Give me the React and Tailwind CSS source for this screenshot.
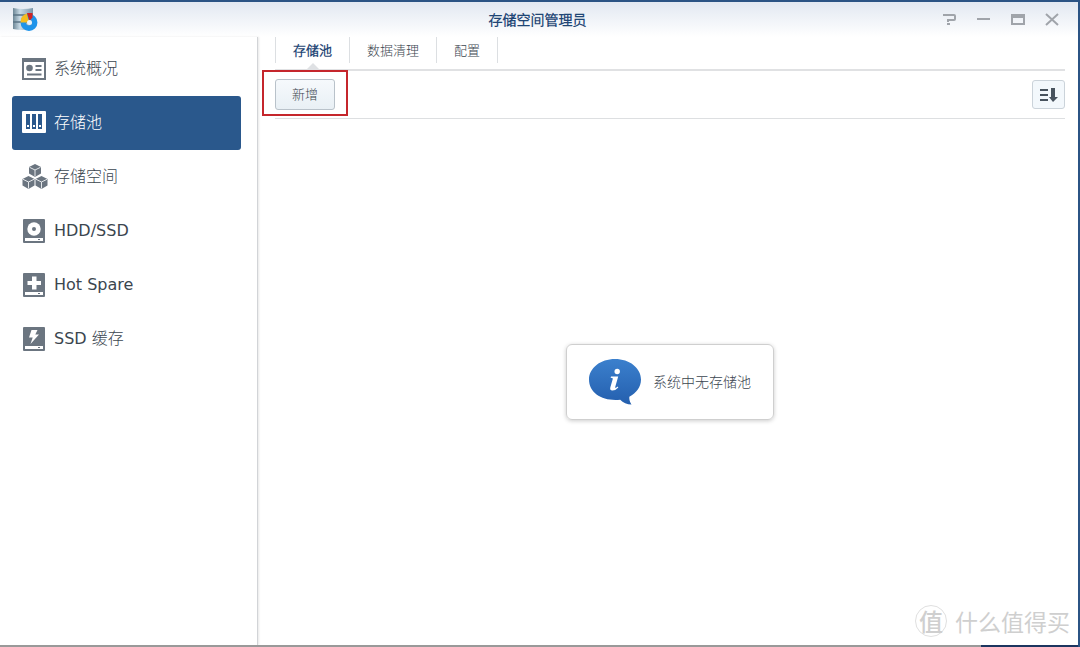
import React, { useState } from 'react';

const OverviewIcon = () => (
  <svg width="24" height="24" viewBox="0 0 24 24" fill="none">
    <rect x="1" y="2" width="22" height="20" fill="#fff" stroke="currentColor" strokeWidth="2" />
    <path d="M0 1h24v4H0z" fill="currentColor" />
    <circle cx="7.5" cy="11" r="3.3" fill="currentColor" />
    <path d="M13.5 9h6M13.5 13h6M5 17.5h14.5" stroke="currentColor" strokeWidth="2" />
  </svg>
);

const PoolIcon = () => (
  <svg width="24" height="24" viewBox="0 0 24 24" fill="none">
    <rect width="24" height="22" rx="1" fill="currentColor" />
    <path d="M4 3h4v15H4zM10 3h4v15h-4zM16 3h4v15h-4z" fill="#2a588c" />
    <path d="M5 14h2v2H5zM11 14h2v2h-2zM17 14h2v2h-2z" fill="currentColor" />
  </svg>
);

const Cube = ({ x, y }) => (
  <g transform={`translate(${x} ${y})`}>
    <path d="M6 0l6 3v6.5L6 13 0 9.5V3z" fill="currentColor" />
    <path d="M.5 3.3L6 6l5.5-2.7M6 6v6.5" stroke="#e4e7ea" strokeWidth="1" fill="none" />
  </g>
);

const VolumeIcon = () => (
  <svg width="26" height="26" viewBox="0 0 26 26" fill="none">
    <Cube x={7} y={0} />
    <Cube x={0.5} y={12} />
    <Cube x={13.5} y={12} />
  </svg>
);

const DriveIcon = ({ children }) => (
  <svg width="24" height="24" viewBox="0 0 24 24" fill="none">
    <rect x="1" width="22" height="24" rx="1" fill="currentColor" />
    <path d="M3 19h18v3H3z" fill="#fff" />
    <path d="M16 20h2v1h-2z" fill="currentColor" />
    {children}
  </svg>
);

const DiskIcon = () => (
  <DriveIcon>
    <circle cx="12" cy="10" r="6.7" fill="#fff" />
    <circle cx="12" cy="10" r="2" fill="currentColor" />
  </DriveIcon>
);

const SpareIcon = () => (
  <DriveIcon>
    <path d="M10 3.5h4.5V8H19v4h-4.5v4.5H10V12H5.5V8H10z" fill="#fff" />
  </DriveIcon>
);

const CacheIcon = () => (
  <DriveIcon>
    <path d="M9.5 3h6l-2.2 4.5H17L8.5 17l2.2-6.5H7z" fill="#fff" />
  </DriveIcon>
);

const AppLogo = () => (
  <svg width="26" height="26" viewBox="0 0 26 26" fill="none">
    <defs>
      <linearGradient id="rack" x1="0" y1="0" x2="1" y2="0">
        <stop offset="0" stopColor="#6d8796" />
        <stop offset=".35" stopColor="#c9dbe6" />
        <stop offset="1" stopColor="#7894a8" />
      </linearGradient>
    </defs>
    <path d="M1 1q10 2 20 0v21q-10 2-20 0z" fill="url(#rack)" />
    <path d="M1 8h20M1 15h20" stroke="#5b7485" strokeWidth="1.5" />
    <circle cx="17" cy="15.5" r="5.7" stroke="#1e94ea" strokeWidth="5.5" />
    <path d="M17 15.5H8.5a8.5 8.5 0 0 1 6.5-9z" fill="#f5bd1f" />
    <path d="M17.5 14L15 6h5.5v4.5z" fill="#cf2424" />
    <circle cx="17.5" cy="15.5" r="2.5" fill="#eaf3fa" />
  </svg>
);

const InfoBubble = () => (
  <svg width="52" height="46" viewBox="0 0 52 46" fill="none">
    <defs>
      <linearGradient id="bubble" x1="0" y1="0" x2="0" y2="1">
        <stop offset="0" stopColor="#3b80cd" />
        <stop offset="1" stopColor="#245fae" />
      </linearGradient>
    </defs>
    <path
      d="M26 0C40.5 0 52 9 52 20.5c0 7.5-4.500 13.500-11.700 17.200-.2 3 .7 5.600 2.200 7.900-4.500-.3-8.500-2-11.300-4.900C14 42.500 0 34.500 0 20.500 0 9 11.500 0 26 0z"
      fill="url(#bubble)"
    />
    <circle cx="28.2" cy="12.5" r="2.7" fill="#fff" />
    <path d="M22 17.5h7.2l-3.2 11.2q1 .3 2.700-1.200l.6.900q-3 3.300-6 3.200-2.700-.4-2-3.200l2.600-8.900q-.8-.7-2.300-.7z" fill="#fff" />
  </svg>
);

const navItems = [
  { label: '系统概况', icon: OverviewIcon },
  { label: '存储池', icon: PoolIcon },
  { label: '存储空间', icon: VolumeIcon },
  { label: 'HDD/SSD', icon: DiskIcon },
  { label: 'Hot Spare', icon: SpareIcon },
  { label: 'SSD 缓存', icon: CacheIcon },
];

const tabs = ['存储池', '数据清理', '配置'];

const windowControls = [
  { label: '帮助', path: 'M0 2h11q1 0 1 1v3q0 1-1 1H5v2M4 11h3' },
  { label: '最小化', path: 'M0 6h13' },
  { label: '最大化', path: 'M1 2h12v9H1zM1 4h12' },
  { label: '关闭', path: 'M1 1l12 11M13 1l-12 11' },
];

const TitleBar = () => (
  <header className="grid h-[35px] grid-cols-[1fr_auto_1fr] items-center bg-linear-to-b from-[#e2e8f1] to-white pr-[19px] pl-3">
    <AppLogo />
    <h1 className="pl-1 text-sm font-bold text-[#1f4675]">存储空间管理员</h1>
    <div className="flex justify-end gap-5">
      {windowControls.map((control) => (
        <button key={control.label} type="button" aria-label={control.label} className="text-[#a0a4aa]">
          <svg width="14" height="14" viewBox="0 0 14 14" fill="none">
            <path d={control.path} stroke="currentColor" strokeWidth="2" />
          </svg>
        </button>
      ))}
    </div>
  </header>
);

const Sidebar = ({ active, onSelect }) => (
  <nav className="w-[258px] shrink-0 border-r border-[#d2d4d7] pt-[5px] pr-4 pl-3 shadow-[1px_0_2px_#e8e8e8]">
    {navItems.map((item) => {
      const Icon = item.icon;
      const selected = item.label === active;
      return (
        <button
          key={item.label}
          type="button"
          onClick={() => onSelect(item.label)}
          className={`flex h-[54px] w-full items-center rounded-[3px] pl-[10px] text-base ${
            selected ? 'bg-[#2a588c] text-white' : 'text-[#3b464f]'
          }`}
        >
          <span className={`flex w-8 ${selected ? 'text-white' : 'text-[#6b7580]'}`}>
            <Icon />
          </span>
          {item.label}
        </button>
      );
    })}
  </nav>
);

const Tabs = ({ active, onSelect }) => (
  <div className="flex h-[34px] border-b-2 border-[#e0e1e3]">
    <div role="tablist" className="flex h-[26px] border-l border-[#dcdfe2]">
      {tabs.map((tab) => (
        <button
          key={tab}
          type="button"
          role="tab"
          aria-selected={tab === active}
          onClick={() => onSelect(tab)}
          className={`relative border-r border-[#dcdfe2] px-[17px] pt-[2px] text-[13px] ${
            tab === active ? 'font-bold text-[#1f4675]' : 'text-[#3b464f]'
          }`}
        >
          {tab}
          {tab === active && (
            <svg className="absolute top-[26px] left-1/2 -translate-x-1/2" width="14" height="7" viewBox="0 0 14 7">
              <path d="M0 7l7-7 7 7z" fill="#dfe1e4" />
            </svg>
          )}
        </button>
      ))}
    </div>
  </div>
);

const Toolbar = () => (
  <div className="flex h-12 items-center justify-between border-b border-[#dddfe1]">
    <div className="relative">
      <button
        type="button"
        className="h-[31px] rounded-[3px] border border-[#b9c2ca] bg-linear-to-b from-[#f6f9fc] to-[#e9f0f5] px-4 text-[13px] text-[#3b464f]"
      >
        新增
      </button>
      <span className="pointer-events-none absolute -inset-x-[13px] -top-[9px] -bottom-[6px] border-2 border-[#c5262c]" />
    </div>
    <button
      type="button"
      aria-label="排序"
      className="flex h-[29px] w-[33px] items-center justify-center rounded-[3px] border border-[#cbd3da] bg-[#f3f8fc] text-[#48535e]"
    >
      <svg width="18" height="14" viewBox="0 0 18 14" fill="none">
        <path d="M0 2h8M0 7h8M0 12h8" stroke="currentColor" strokeWidth="2" />
        <path d="M11 0h4v9h3l-5 5-4-5h2z" fill="currentColor" />
      </svg>
    </button>
  </div>
);

const Watermark = () => (
  <div className="pointer-events-none absolute right-2 bottom-[10px] flex items-center gap-2 font-['Noto_Sans_CJK_SC',sans-serif] text-[#cfcfcf]">
    <span className="flex size-8 items-center justify-center rounded-full border border-[#e0e0e0] text-2xl leading-none font-medium">
      值
    </span>
    <span className="text-[23px] leading-8">什么值得买</span>
  </div>
);

export default function App() {
  const [page, setPage] = useState('存储池');
  const [tab, setTab] = useState('存储池');

  return (
    <div className="relative flex min-h-screen flex-col border-t-2 border-r-2 border-[#2b5384] bg-white font-['DejaVu_Sans','Noto_Sans_CJK_SC_Light','Noto_Sans_CJK_SC',sans-serif]">
      <TitleBar />
      <div className="flex flex-1">
        <Sidebar active={page} onSelect={setPage} />
        <main className="flex flex-1 flex-col pr-[13px] pl-[17px]">
          <Tabs active={tab} onSelect={setTab} />
          <Toolbar />
          <div className="flex flex-1 items-center justify-center">
            <div className="flex h-[76px] items-center gap-3 rounded-md border border-[#cfcfcf] px-[22px] text-sm text-[#3b464f] shadow-[0_1px_4px_#cccccc]">
              <InfoBubble />
              <p>系统中无存储池</p>
            </div>
          </div>
        </main>
      </div>
      <footer className="flex h-[2px] bg-[#999999]">
        <div className="ml-auto w-[9%] bg-[#1c355f]" />
      </footer>
      <Watermark />
    </div>
  );
}
